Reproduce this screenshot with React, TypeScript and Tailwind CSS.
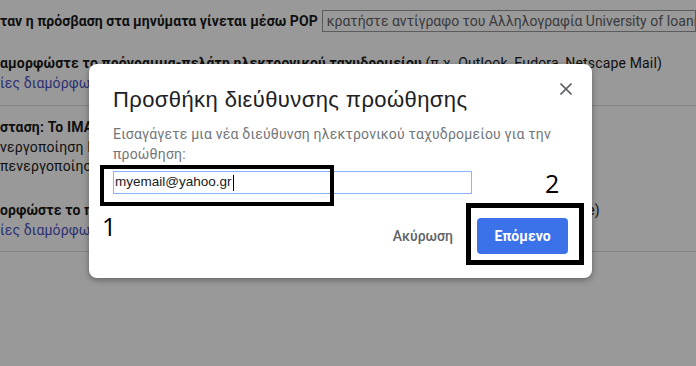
import React from "react";

export default function App() {
  const bg = { fontFamily: "Roboto, 'Liberation Sans', sans-serif" };
  return (
    <div className="relative w-[696px] h-[366px] overflow-hidden bg-white" style={bg}>
      {/* page content */}
      <div className="flex flex-col text-[14px] leading-5 tracking-[0.16px] text-[#1a1a1a] whitespace-nowrap">
        <div className="flex items-center h-[21px] mt-[10px]">
          <span className="font-bold tracking-[0.05px]">ταν η πρόσβαση στα μηνύματα γίνεται μέσω POP</span>
          <div className="ml-[4px] h-[22px] flex-1 min-w-0 border border-[#999] flex items-center pl-[4px] text-[#5f6368] tracking-normal overflow-hidden">
            <span className="whitespace-nowrap">κρατήστε αντίγραφο του Αλληλογραφία University of Ioannina</span>
          </div>
        </div>
        <div className="mt-[22px] flex flex-col border-b border-[#dcdcdc] pb-[12px]">
          <div>
            <span className="font-bold">αμορφώστε το πρόγραμμα-πελάτη ηλεκτρονικού ταχυδρομείου</span>{" "}
            <span>(π.χ. Outlook, Eudora, Netscape Mail)</span>
          </div>
          <div className="text-[#4b51c0]">ίες διαμόρφωσης</div>
        </div>
        <div className="mt-[11px] flex flex-col">
          <div className="font-bold">σταση: Το IMAP είναι ενεργοποιημένο</div>
          <div className="leading-[20px]">νεργοποίηση IMAP</div>
          <div className="leading-[19px]">πενεργοποίηση IMAP</div>
        </div>
        <div className="mt-[24px] flex flex-col border-b border-[#dcdcdc] pb-[11px]">
          <div className="tracking-[0.09px]">
            <span className="font-bold">ορφώστε το πρόγραμμα-πελάτη ηλεκτρονικού ταχυδρομείου</span>{" "}
            <span>(π.χ. Outlook, iOS Mail, iPhone)</span>
          </div>
          <div className="text-[#4b51c0]">ίες διαμόρφωσης</div>
        </div>
      </div>

      {/* dim overlay */}
      <div className="absolute inset-0 bg-black/40" />

      {/* dialog */}
      <div className="absolute left-[89px] top-[64px] w-[503px] h-[214px] rounded-lg bg-white shadow-[0_2px_6px_rgba(0,0,0,0.35)] flex flex-col px-6 pt-[22px] pb-6">
        <div className="text-[22px] leading-7 tracking-[0.4px] text-[#202124]" style={{ fontFamily: "'Liberation Sans', Arial, sans-serif" }}>
          Προσθήκη διεύθυνσης προώθησης
        </div>
        <button className="absolute left-[471px] top-[19px] w-[12px] h-[12px]" aria-label="close">
          <svg width="12" height="12" viewBox="0 0 12 12">
            <path d="M0.5 0.5 L11.5 11.5 M11.5 0.5 L0.5 11.5" stroke="#5f6368" strokeWidth="1.6" />
          </svg>
        </button>
        <div className="mt-[10px] text-[14px] leading-5 tracking-[0.2px] text-[#72767b]">
          Εισαγάγετε μια νέα διεύθυνση ηλεκτρονικού ταχυδρομείου για την προώθηση:
        </div>
        <div className="mt-[7px] w-[359px] h-[23px] border border-[#8ab4f8] flex items-center pl-px text-[13.5px] text-[#202124]" style={{ fontFamily: "'Liberation Sans', Arial, sans-serif" }}>
          myemail@yahoo.gr<span className="inline-block w-px h-[16px] bg-black ml-px" />
        </div>
        <div className="mt-auto flex justify-end items-center">
          <button className="px-6 h-9 text-[14px] font-medium text-[#5f6368]">Ακύρωση</button>
          <button className="h-9 w-[91px] rounded bg-[#3b71e9] text-white text-[14px] font-bold">Επόμενο</button>
        </div>
      </div>

      {/* annotations */}
      <div className="absolute left-[100px] top-[165px] w-[234px] h-[41px] border-[4px] border-black" />
      <div className="absolute left-[466px] top-[203px] w-[118px] h-[62px] border-[5px] border-black" />
      <div className="absolute left-[102px] top-[208px] text-[25px] leading-[36px] text-black" style={{ fontFamily: "'Open Sans', sans-serif" }}>1</div>
      <div className="absolute left-[545px] top-[165px] text-[25px] leading-[36px] text-black" style={{ fontFamily: "'Open Sans', sans-serif" }}>2</div>
    </div>
  );
}
